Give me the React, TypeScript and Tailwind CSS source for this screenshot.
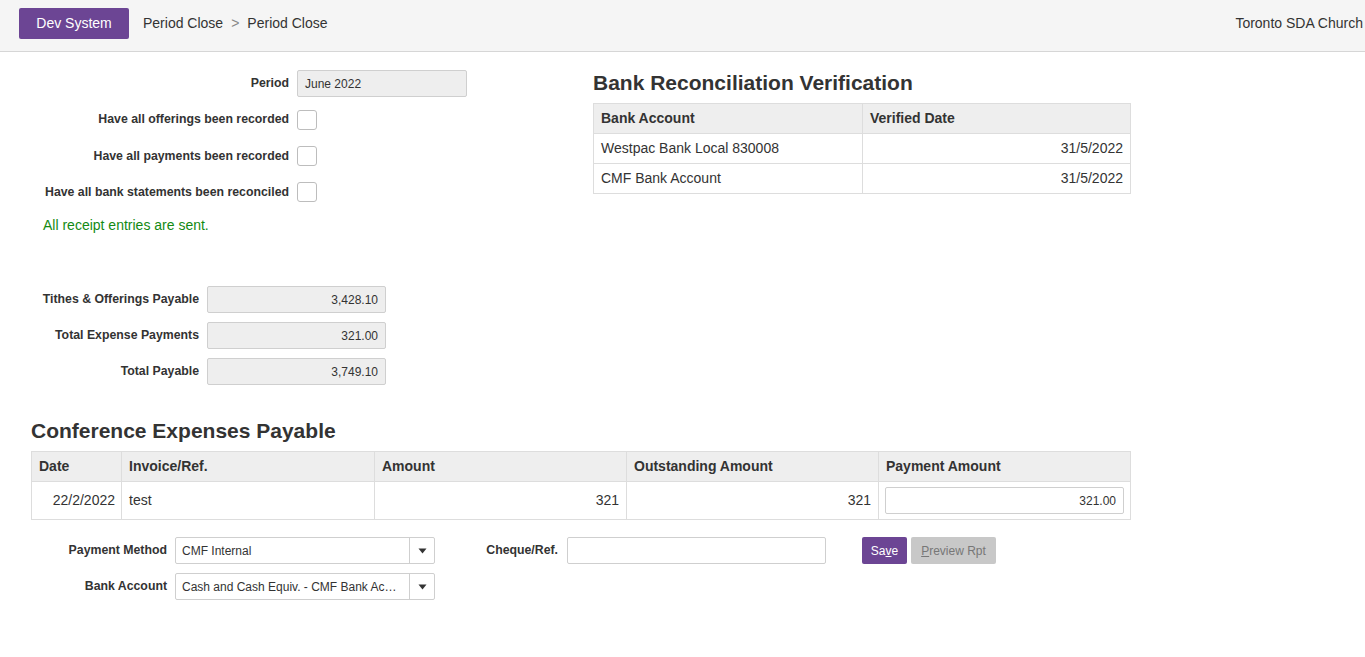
import React from "react";

const font = "font-['Liberation_Sans',Arial,Helvetica,sans-serif]";

function Label({ w, children }: { w: string; children: React.ReactNode }) {
  return (
    <div className={`${w} shrink-0 pr-2 text-right text-[12.3px] font-bold text-[#333]`}>{children}</div>
  );
}

function Checkbox() {
  return <div className="h-[20px] w-[20px] rounded-[3px] border border-[#bdbdbd] bg-white" />;
}

function ReadOnly({ w, value, right }: { w: string; value: string; right?: boolean }) {
  return (
    <div
      className={`${w} flex h-[27px] items-center rounded-[2px] border border-[#cfcfcf] bg-[#eeeeee] px-[7px] text-[12px] text-[#333] ${
        right ? "justify-end" : ""
      }`}
    >
      {value}
    </div>
  );
}

function Select({ value }: { value: string }) {
  return (
    <div className="flex h-[27px] w-[260px] items-center rounded-[2px] border border-[#cfcfcf] bg-white text-[12px] text-[#333]">
      <div className="min-w-0 flex-1 whitespace-nowrap px-[6px]">{value}</div>
      <div className="flex h-full w-[25px] items-center justify-center border-l border-[#cfcfcf]">
        <svg width="9" height="6" viewBox="0 0 9 6">
          <path d="M0.5 0.5 L8.5 0.5 L4.5 5.5 Z" fill="#333" />
        </svg>
      </div>
    </div>
  );
}

export default function App() {
  return (
    <div className={`min-h-screen bg-white ${font} text-[#333]`}>
      <header className="flex h-[52px] items-start border-b border-[#d6d6d6] bg-[#f5f5f5] pt-[8px]">
        <div className="ml-[19px] flex h-[31px] w-[110px] items-center justify-center rounded-[2px] bg-[#6c4594] text-[14px] text-white">
          Dev System
        </div>
        <div className="ml-[14px] flex h-[31px] items-center text-[14px] text-[#333]">
          <span>Period Close</span>
          <span className="mx-[8px] text-[#888]">&gt;</span>
          <span>Period Close</span>
        </div>
        <div className="ml-auto flex h-[31px] items-center pr-[2px] text-[14px] text-[#333]">Toronto SDA Church</div>
      </header>

      <main className="flex flex-col">
        <div className="flex pt-[18px]">
          <div className="w-[593px] shrink-0">
            <div className="flex h-[27px] items-center">
              <Label w="w-[297px]">Period</Label>
              <ReadOnly w="w-[170px]" value="June 2022" />
            </div>
            <div className="mt-[4px] flex h-[37px] items-center">
              <Label w="w-[297px]">Have all offerings been recorded</Label>
              <Checkbox />
            </div>
            <div className="flex h-[36px] items-center">
              <Label w="w-[297px]">Have all payments been recorded</Label>
              <Checkbox />
            </div>
            <div className="flex h-[36px] items-center">
              <Label w="w-[297px]">Have all bank statements been reconciled</Label>
              <Checkbox />
            </div>
            <div className="mt-[7px] pl-[43px] text-[14px] leading-4 text-[#138a13]">
              All receipt entries are sent.
            </div>
            <div className="mt-[53px] flex flex-col gap-[9px]">
              <div className="flex h-[27px] items-center">
                <Label w="w-[207px]">Tithes &amp; Offerings Payable</Label>
                <ReadOnly w="w-[179px]" value="3,428.10" right />
              </div>
              <div className="flex h-[27px] items-center">
                <Label w="w-[207px]">Total Expense Payments</Label>
                <ReadOnly w="w-[179px]" value="321.00" right />
              </div>
              <div className="flex h-[27px] items-center">
                <Label w="w-[207px]">Total Payable</Label>
                <ReadOnly w="w-[179px]" value="3,749.10" right />
              </div>
            </div>
          </div>

          <div className="w-[538px]">
            <h2 className="h-[26px] text-[21px] font-bold leading-[26px] text-[#333]">
              Bank Reconciliation Verification
            </h2>
            <table className="mt-[7px] w-full border-collapse text-[14px]">
              <thead>
                <tr className="h-[30px] bg-[#eeeeee]">
                  <th className="w-[269px] border border-[#dddddd] px-[7px] text-left font-bold">Bank Account</th>
                  <th className="border border-[#dddddd] px-[7px] text-left font-bold">Verified Date</th>
                </tr>
              </thead>
              <tbody>
                <tr className="h-[30px]">
                  <td className="border border-[#dddddd] px-[7px]">Westpac Bank Local 830008</td>
                  <td className="border border-[#dddddd] px-[7px] text-right">31/5/2022</td>
                </tr>
                <tr className="h-[30px]">
                  <td className="border border-[#dddddd] px-[7px]">CMF Bank Account</td>
                  <td className="border border-[#dddddd] px-[7px] text-right">31/5/2022</td>
                </tr>
              </tbody>
            </table>
          </div>
        </div>

        <div className="pl-[31px]">
          <h2 className="mt-[33px] h-[26px] text-[21px] font-bold leading-[26px] text-[#333]">
            Conference Expenses Payable
          </h2>
          <table className="mt-[7px] w-[1100px] border-collapse text-[14px]">
            <thead>
              <tr className="h-[30px] bg-[#eeeeee]">
                <th className="w-[90px] border border-[#dddddd] px-[7px] text-left font-bold">Date</th>
                <th className="w-[253px] border border-[#dddddd] px-[7px] text-left font-bold">Invoice/Ref.</th>
                <th className="w-[252px] border border-[#dddddd] px-[7px] text-left font-bold">Amount</th>
                <th className="w-[252px] border border-[#dddddd] px-[7px] text-left font-bold">Outstanding Amount</th>
                <th className="border border-[#dddddd] px-[7px] text-left font-bold">Payment Amount</th>
              </tr>
            </thead>
            <tbody>
              <tr className="h-[38px]">
                <td className="border border-[#dddddd] px-[6px] text-right">22/2/2022</td>
                <td className="border border-[#dddddd] px-[7px]">test</td>
                <td className="border border-[#dddddd] px-[7px] text-right">321</td>
                <td className="border border-[#dddddd] px-[7px] text-right">321</td>
                <td className="border border-[#dddddd] px-[6px]">
                  <div className="flex h-[27px] items-center justify-end rounded-[2px] border border-[#cfcfcf] bg-white px-[7px] text-[12px]">
                    321.00
                  </div>
                </td>
              </tr>
            </tbody>
          </table>
        </div>

        <div className="mt-[17px] flex items-center">
          <Label w="w-[175px]">Payment Method</Label>
          <Select value="CMF Internal" />
          <div className="w-[132px] shrink-0 pr-[9px] text-right text-[12.3px] font-bold">Cheque/Ref.</div>
          <div className="h-[27px] w-[259px] rounded-[2px] border border-[#cfcfcf] bg-white" />
          <button className="ml-[36px] flex h-[27px] w-[45px] items-center justify-center rounded-[2px] bg-[#6c4594] text-[12px] text-white">
            Sa<span className="underline">v</span>e
          </button>
          <button className="ml-[4px] flex h-[27px] w-[85px] items-center justify-center rounded-[2px] bg-[#c8c8c8] text-[12px] text-[#777]">
            <span className="underline">P</span>review Rpt
          </button>
        </div>
        <div className="mt-[9px] flex items-center">
          <Label w="w-[175px]">Bank Account</Label>
          <Select value="Cash and Cash Equiv. - CMF Bank Ac…" />
        </div>
      </main>
    </div>
  );
}
